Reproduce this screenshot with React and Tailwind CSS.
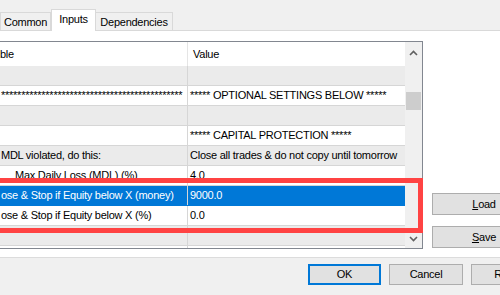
const rows = [
  { left: "", value: "", tone: "gray" },
  { left: "*".repeat(45), value: "***** OPTIONAL SETTINGS BELOW *****", tone: "white" },
  { left: "", value: "", tone: "gray" },
  { left: "", value: "***** CAPITAL PROTECTION *****", tone: "white" },
  { left: "MDL violated, do this:", value: "Close all trades & do not copy until tomorrow", tone: "gray" },
  { left: "Max Daily Loss (MDL) (%)", value: "4.0", tone: "white", indent: true },
  { left: "ose & Stop if Equity below X (money)", value: "9000.0", tone: "selected" },
  { left: "ose & Stop if Equity below X (%)", value: "0.0", tone: "white" },
  { left: "", value: "", tone: "gray" },
  { left: "", value: "", tone: "white" },
]

function Row({ row }) {
  const selected = row.tone === "selected"
  const bg = selected ? "bg-[#0078d7] text-white border-[#0078d7]" : row.tone === "gray" ? "bg-[#ebebeb] border-[#d6d6d6]" : "bg-white border-[#d6d6d6]"
  return (
    <div className={`flex h-[20px] shrink-0 border-b ${bg}`}>
      <div className={`w-[188px] shrink-0 overflow-hidden whitespace-nowrap border-r border-[#d6d6d6] leading-[19px] ${row.indent ? "pl-[15px]" : "pl-[1px]"}`}>
        {row.left}
      </div>
      <div className="flex-1 overflow-hidden whitespace-nowrap pl-[2px] leading-[19px]">{row.value}</div>
    </div>
  )
}

function Button({ children, className = "" }) {
  return (
    <div className={`flex h-[22px] shrink-0 items-center justify-center border border-[#adadad] bg-[#e1e1e1] ${className}`}>
      {children}
    </div>
  )
}

export default function App() {
  return (
    <div className="relative flex h-[295px] w-[500px] flex-col overflow-hidden bg-white font-['Liberation_Sans',Arial,sans-serif] text-[11px] tracking-[-0.25px] text-black">
      {/* tab strip */}
      <div className="flex h-[31px] shrink-0 items-end border-b border-[#d9d9d9] bg-[#f0f0f0]">
        <div className="mb-[-1px] flex h-[19px] w-[51px] shrink-0 items-center justify-center border border-[#d9d9d9] bg-[#f0f0f0] pt-[1px]">Common</div>
        <div className="relative z-10 mb-[-1px] flex h-[22px] w-[45px] shrink-0 items-center justify-center border border-b-0 border-[#d9d9d9] bg-white pb-[2px]">Inputs</div>
        <div className="mb-[-1px] flex h-[19px] w-[77px] shrink-0 items-center justify-center border border-l-0 border-[#d9d9d9] bg-[#f0f0f0] pt-[1px]">Dependencies</div>
      </div>

      {/* content */}
      <div className="flex h-[226px] shrink-0 bg-white">
        <div className="mt-[10px] flex h-[208px] w-[423px] shrink-0 border-y border-r border-[#828790]">
          <div className="flex w-[405px] flex-col overflow-hidden">
            <div className="flex h-[24px] shrink-0 bg-white">
              <div className="w-[188px] shrink-0 border-r border-[#e5e5e5] leading-[24px]">ble</div>
              <div className="flex-1 pl-[5px] leading-[24px]">Value</div>
            </div>
            {rows.map((r, i) => (
              <Row key={i} row={r} />
            ))}
          </div>
          <div className="flex w-[17px] flex-col items-center bg-[#f0f0f0]">
            <svg width="9" height="6" viewBox="0 0 9 6" className="mt-[8px]">
              <path d="M1 5 L4.5 1.5 L8 5" fill="none" stroke="#606060" strokeWidth="1.6" />
            </svg>
            <div className="mt-[36px] h-[18px] w-[15px] bg-[#cdcdcd]" />
            <div className="flex-1" />
            <svg width="9" height="6" viewBox="0 0 9 6" className="mb-[6px]">
              <path d="M1 1 L4.5 4.5 L8 1" fill="none" stroke="#606060" strokeWidth="1.6" />
            </svg>
          </div>
        </div>
        <div className="ml-[9px] flex shrink-0 flex-col gap-[11px] pt-[162px]">
          <Button className="w-[104px]">
            <span><span className="underline">L</span>oad</span>
          </Button>
          <Button className="w-[104px]">
            <span><span className="underline">S</span>ave</span>
          </Button>
        </div>
      </div>

      {/* bottom bar */}
      <div className="flex flex-1 gap-[8px] border-t border-[#dcdcdc] bg-[#f0f0f0] pl-[308px] pt-[6px]">
        <div className="flex h-[21px] w-[73px] shrink-0 items-center justify-center border-2 border-[#0078d7] bg-[#e1e1e1]">OK</div>
        <div className="flex h-[21px] w-[74px] shrink-0 items-center justify-center border border-[#adadad] bg-[#e1e1e1]">Cancel</div>
        <div className="flex h-[21px] w-[74px] shrink-0 items-center justify-center border border-[#adadad] bg-[#e1e1e1]">Reset</div>
      </div>

      {/* red annotation frame */}
      <div className="pointer-events-none absolute left-[-10px] top-[178px] h-[55px] w-[433px] border-[5px] border-[#ff4343]" />
    </div>
  )
}
